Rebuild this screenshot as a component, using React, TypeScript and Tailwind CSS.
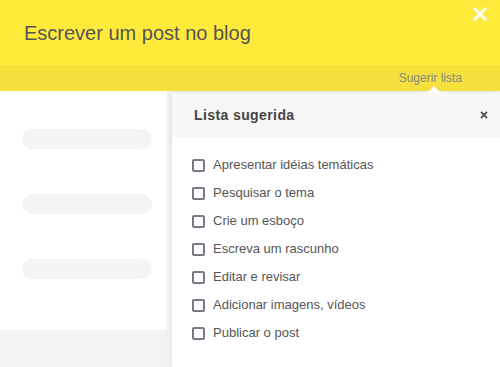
const items = [
  'Apresentar idéias temáticas',
  'Pesquisar o tema',
  'Crie um esboço',
  'Escreva um rascunho',
  'Editar e revisar',
  'Adicionar imagens, vídeos',
  'Publicar o post',
]

export default function App() {
  return (
    <div className="relative w-[500px] h-[367px] overflow-hidden bg-[#f3f3f3] font-['Liberation_Sans',Arial,sans-serif]">
      <div className="bg-[#ffea3b]">
        <div className="relative h-[65px] px-6 pt-[21px]">
          <h1 className="text-[20px] leading-6 text-[#555]">Escrever um post no blog</h1>
          <button className="absolute right-[13px] top-[7px] text-white">
            <svg width="14" height="14" viewBox="0 0 14 14">
              <path d="M2 2L12 12M12 2L2 12" stroke="currentColor" strokeWidth="3" strokeLinecap="square" />
            </svg>
          </button>
        </div>
        <div className="h-[26px] bg-[#f5e03e] flex items-center justify-end pr-[38px]">
          <span className="text-[12px] text-[#888]">Sugerir lista</span>
        </div>
      </div>

      <div className="w-[167px] h-[239px] bg-white flex flex-col gap-[45px] pt-[38px] pl-[22px]">
        <div className="w-[130px] h-5 rounded-full bg-[#f4f4f4]" />
        <div className="w-[130px] h-5 rounded-full bg-[#f4f4f4]" />
        <div className="w-[130px] h-5 rounded-full bg-[#f4f4f4]" />
      </div>

      <div className="absolute left-[172px] top-[93px] right-0 bottom-0 bg-white shadow-[-2px_0_6px_rgba(0,0,0,0.06)]">
        <div className="absolute -top-[7px] left-[255px] w-0 h-0 border-x-[7px] border-x-transparent border-b-[7px] border-b-white" />
        <div className="h-[44px] bg-[#f7f7f7] flex items-center justify-between pl-[22px] pr-[12px]">
          <span className="text-[14px] tracking-[0.4px] font-bold text-[#444]">Lista sugerida</span>
          <svg width="8" height="8" viewBox="0 0 8 8" className="text-[#555]">
            <path d="M1 1L7 7M7 1L1 7" stroke="currentColor" strokeWidth="1.8" />
          </svg>
        </div>
        <ul className="pt-[14px] pl-5 flex flex-col">
          {items.map(item => (
            <li key={item} className="h-7 flex items-center gap-[8px]">
              <span className="w-[13px] h-[13px] border-2 border-[#7a7886] rounded-[2px]" />
              <span className="text-[13px] text-[#555]">{item}</span>
            </li>
          ))}
        </ul>
      </div>
    </div>
  )
}
